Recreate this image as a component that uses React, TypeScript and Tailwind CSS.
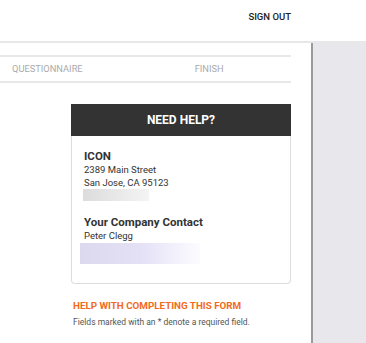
import React from 'react';

const steps = [
    { label: 'QUESTIONNAIRE', className: 'ml-[12px]' },
    { label: 'FINISH', className: 'ml-[112px]' },
];

const NeedHelpCard: React.FC = () => {
    return (
        <div className="w-[220px] ml-[71px] mt-[21px]">
            <div className="h-[32px] bg-[#333333] flex items-center justify-center">
                <span className="text-white font-bold text-[12px]">NEED HELP?</span>
            </div>
            <div className="border border-t-0 border-[#dddddd] rounded-b-[4px] pl-[12px] pt-[13px] pb-[19px]">
                <p className="font-bold text-[11.5px] leading-[14px] text-[#333333]">ICON</p>
                <p className="text-[9.5px] leading-[13px] text-[#333333]">2389 Main Street</p>
                <p className="text-[9.5px] leading-[13px] text-[#333333]">San Jose, CA 95123</p>
                <div className="w-[66px] h-[12px] ml-[-1px] bg-gradient-to-r from-[#dcdcdc] to-[#f4f4f4]"></div>
                <p className="mt-[14px] font-bold text-[11.5px] leading-[14px] text-[#333333]">Your Company Contact</p>
                <p className="text-[9.5px] leading-[13px] text-[#333333]">Peter Clegg</p>
                <div className="w-[120px] h-[21px] ml-[-4px] mt-[1px] bg-gradient-to-r from-[#dcd8ee] via-[#e4e0f6] to-[#fcfcff]"></div>
            </div>
        </div>
    );
};

export default function App() {
    return (
        <div className="w-[366px] h-[343px] bg-white overflow-hidden" style={{ fontFamily: 'Roboto, "Liberation Sans", sans-serif' }}>
            <div className="h-[43px] border-b-2 border-[#e8e8e8] flex items-center justify-end pr-[75px]">
                <span className="text-[9.5px] font-medium text-[#222222] mt-[-6px]">SIGN OUT</span>
            </div>
            <div className="flex h-[300px]">
                <div className="w-[313px] border-r-2 border-[#9a9a9a] pr-[20px]">
                    <div className="mt-[12px] h-[28px] border-y-2 border-[#e8e8e8] flex items-center">
                        {steps.map(step => (
                            <span key={step.label} className={`text-[9.3px] text-[#aaaaaa] ${step.className}`}>{step.label}</span>
                        ))}
                    </div>
                    <NeedHelpCard />
                    <div className="ml-[73px] mt-[15px]">
                        <p className="font-bold text-[9.8px] text-[#f26b21]">HELP WITH COMPLETING THIS FORM</p>
                        <p className="mt-[2px] text-[8.5px] text-[#555555]">Fields marked with an * denote a required field.</p>
                    </div>
                </div>
                <div className="flex-1 bg-[#e8e8ec]"></div>
            </div>
        </div>
    );
}
